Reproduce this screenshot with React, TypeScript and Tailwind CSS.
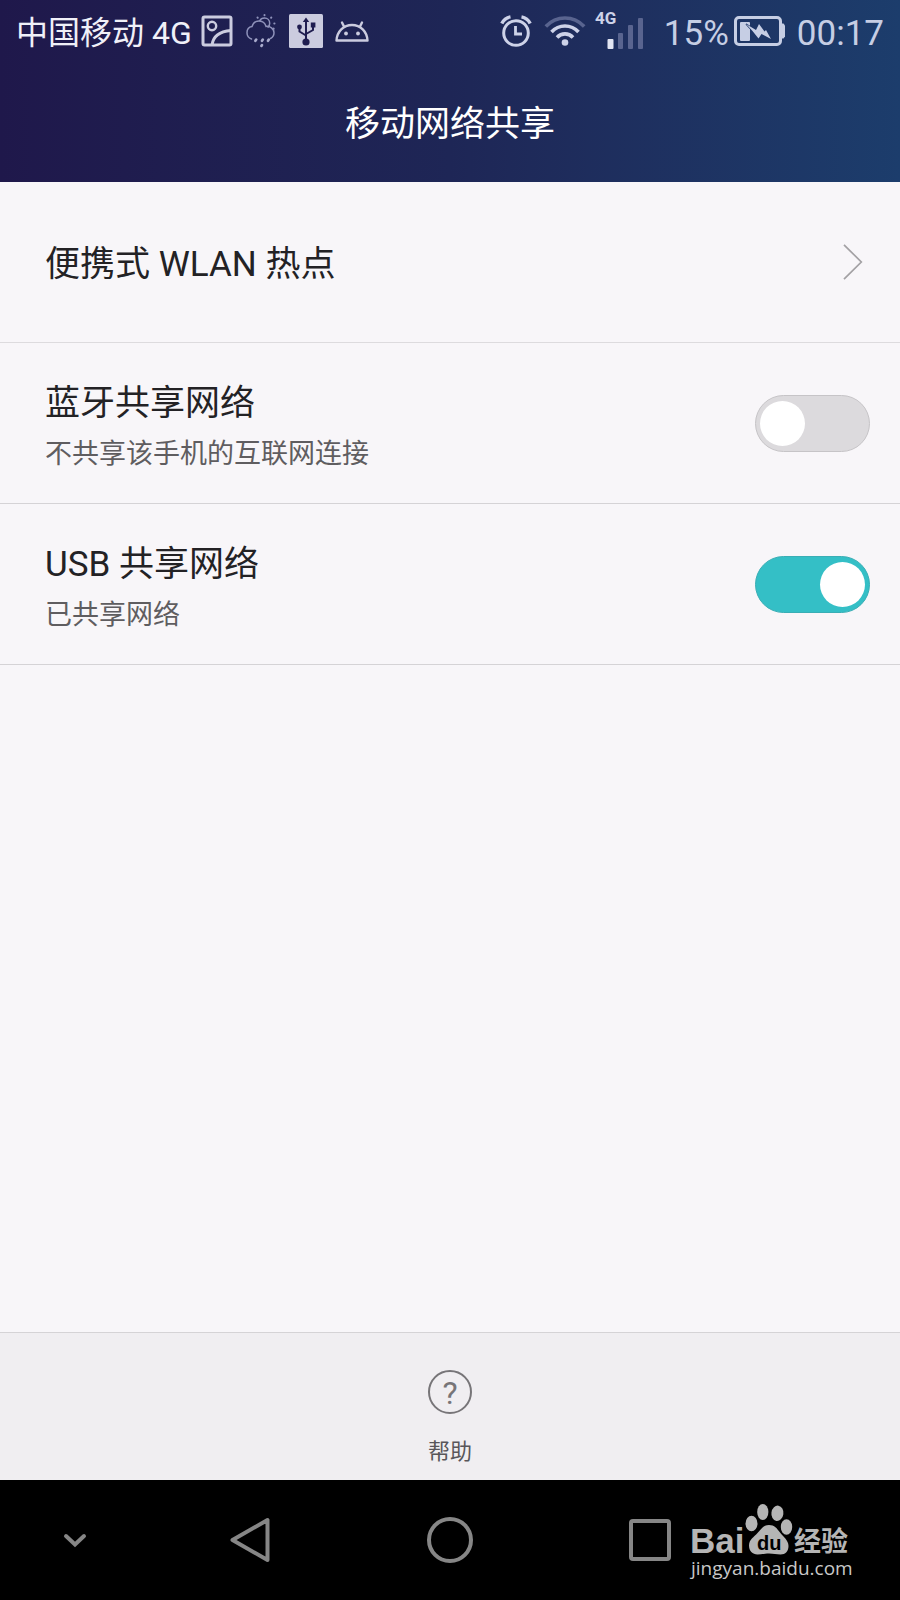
import React from 'react';

type SwitchRowProps = {
  id: string;
  title: string;
  onText: string;
  offText: string;
  defaultOn: boolean;
};

const PictureIcon = () => (
  <svg width="32" height="32" viewBox="0 0 32 32" fill="none" stroke="#cbccdf" strokeWidth="3" aria-hidden="true">
    <rect x="2" y="2" width="28" height="28" rx="1.5" />
    <circle cx="11" cy="11" r="4.2" strokeWidth="2.4" />
    <path d="M11 30c1-8 7-13.500 19-14.500" />
  </svg>
);

const WeatherIcon = () => (
  <svg width="32" height="34" viewBox="0 0 32 34" fill="none" stroke="#8f92ba" strokeWidth="1.5" strokeLinecap="round" aria-hidden="true">
    <path d="M6.500 25C3.500 24 2 21.500 2 18.800c0-3.500 2.300-5.800 5-6.200C8 9 11 6.800 14.500 7c3.300.2 5.600 2.300 6.500 5.400 4-.4 8 2.200 8 6.400 0 2.600-1.300 4.600-3.500 5.700" />
    <path d="M14.800 6.800c.8-1.800 2.600-2.800 4.700-2.800 3 0 5.200 2.300 5.200 5.200 0 1.600-.6 2.900-1.700 3.900" />
    <path d="M12.500 3.500l.2.200M19.500 1v.2M26.300 3.500l-.2.200M29.500 9.500h-.2M28.500 14.500l.2.200" strokeWidth="2" />
    <path d="M11.200 25.500l-.8 1.300M17.800 25.500l-.8 1.300M23.800 25.500l-.8 1.300M17 31l-.6 1" strokeWidth="2.600" stroke="#a9abcc" />
  </svg>
);

const UsbIcon = () => (
  <svg width="34" height="34" viewBox="0 0 34 34" aria-hidden="true">
    <rect width="34" height="34" rx="1.500" fill="#cbccdf" />
    <g fill="none" stroke="#1f1d50" strokeWidth="2">
      <path d="M17 28V6" />
      <path d="M17 21.500l-6.500-4V13" />
      <path d="M17 20l7-4V11" />
    </g>
    <path d="M17 3.500l3.200 4.500h-6.400z" fill="#1f1d50" />
    <circle cx="17" cy="28" r="3.600" fill="#1f1d50" />
    <circle cx="10.500" cy="13" r="2.400" fill="#1f1d50" />
    <rect x="21.800" y="8.500" width="4.600" height="5" fill="#1f1d50" />
  </svg>
);

const RobotIcon = () => (
  <svg width="34" height="22" viewBox="0 0 34 22" fill="none" stroke="#cbccdf" strokeWidth="2.400" strokeLinejoin="round" strokeLinecap="round" aria-hidden="true">
    <path d="M1.500 20.500C2 11.500 8.500 5 17 5s15 6.500 15.500 15.500z" />
    <path d="M9 6.500L7 2.500M25 6.500l2-4" />
    <circle cx="11" cy="13.500" r="1.900" fill="#cbccdf" stroke="none" />
    <circle cx="23" cy="13.500" r="1.900" fill="#cbccdf" stroke="none" />
  </svg>
);

const AlarmIcon = () => (
  <svg width="32" height="32" viewBox="0 0 32 32" fill="none" stroke="#cdd2e8" strokeWidth="3" aria-hidden="true">
    <circle cx="16" cy="18" r="12.300" />
    <path d="M15.500 11v8h6.500" strokeWidth="2.800" />
    <path d="M1.800 8.500C3.500 5 6.500 2.500 10.500 1.800M30.200 8.500C28.500 5 25.500 2.500 21.500 1.800" strokeWidth="3.400" />
  </svg>
);

const WifiIcon = () => (
  <svg width="42" height="32" viewBox="0 0 42 32" fill="none" stroke="#cdd2e8" strokeWidth="3.600" aria-hidden="true">
    <path d="M1.800 11.500C12.500 .2 29.500 .2 40.200 11.500" stroke="#59648f" />
    <path d="M7.500 17c7.500-8 19.500-8 27 0" />
    <path d="M13 22.500c4.500-4.800 11.500-4.800 16 0" />
    <circle cx="21" cy="27.500" r="3.300" fill="#cdd2e8" stroke="none" />
  </svg>
);

const SignalIcon = () => (
  <svg width="52" height="42" viewBox="0 -4 52 42" aria-label="4G 信号" role="img">
    <text x="1" y="13" fill="#cdd2e8" fontSize="17" fontWeight="700" fontFamily="Roboto, sans-serif">4G</text>
    <rect x="13.500" y="28" width="6" height="10" rx="1" fill="#e2e5f2" />
    <rect x="24" y="22" width="5" height="16" rx="1" fill="#59648f" />
    <rect x="34" y="14" width="5" height="24" rx="1" fill="#59648f" />
    <rect x="44" y="7" width="5" height="31" rx="1" fill="#59648f" />
  </svg>
);

const BatteryIcon = () => (
  <svg width="52" height="32" viewBox="0 0 52 32" aria-hidden="true">
    <rect x="2.500" y="2.500" width="45" height="27" rx="3.500" fill="none" stroke="#c6cee4" strokeWidth="3" />
    <path d="M47 8.500h3.500l1.500 2v11l-1.500 2H47z" fill="#c6cee4" />
    <rect x="7" y="7" width="10" height="19" rx="1" fill="#c6cee4" />
    <path d="M13 9l10 6 3-6 5.500 7.500L33 15l5 9-9.500-5-3 4.500-6-7.500z" fill="#c6cee4" stroke="#1d3566" strokeWidth="1.200" paintOrder="stroke" />
  </svg>
);

const BaiduLogo = () => (
  <svg width="170" height="84" viewBox="0 0 170 84" role="img" aria-label="Baidu 经验">
    <g fill="#b5b5b5">
      <text x="5" y="53" fontSize="35" fontWeight="700" fontFamily="'Liberation Sans', Arial, sans-serif">Bai</text>
      <ellipse cx="66.500" cy="23.500" rx="6" ry="7.700" />
      <ellipse cx="77.800" cy="12" rx="5.600" ry="8" />
      <ellipse cx="92.400" cy="13.300" rx="6" ry="7.700" transform="rotate(8 92.400 13.300)" />
      <ellipse cx="101.500" cy="27" rx="5.700" ry="7.700" />
      <path d="M84 25c5.500 0 8 3.500 11 7.500s8.500 7.500 8.500 13.500c0 5-3 8.500-8 8.500-4 0-7-1-11.500-1s-7.500 1-11.500 1c-5 0-8.500-3.500-8.500-9 0-6 5-8.500 8.500-12.500S78.500 25 84 25z" />
      <text x="109" y="51" fontSize="27" fontWeight="700" fontFamily="'Noto Sans CJK SC', sans-serif">经验</text>
    </g>
    <text x="72" y="50" fill="#000" fontSize="20" fontWeight="700" fontFamily="'Liberation Sans', Arial, sans-serif">du</text>
    <text x="6" y="75" fill="#c8c8c8" fontSize="19" fontFamily="'Open Sans', sans-serif">jingyan.baidu.com</text>
  </svg>
);

const SwitchRow: React.FC<SwitchRowProps> = ({ id, title, onText, offText, defaultOn }) => {
  const [on, setOn] = React.useState(defaultOn);

  return (
    <li className="flex min-h-[161px] items-center justify-between border-b border-[#d5d3d6] pl-[45px] pr-[30px]">
      <label htmlFor={id} className="flex-1 pt-1.5">
        <span className="block text-[35px] leading-[56px] text-[#232225]">{title}</span>
        <span className="block text-[27px] leading-[44px] text-[#5f5d60]">{on ? onText : offText}</span>
      </label>
      <input
        id={id}
        type="checkbox"
        role="switch"
        checked={on}
        onChange={(e) => setOn(e.target.checked)}
        className="flex h-[57px] w-[115px] shrink-0 cursor-pointer appearance-none items-center rounded-full border border-[#c6c4c7] bg-[#dcdadd] px-1 before:size-[45px] before:rounded-full before:bg-white before:content-[''] checked:justify-end checked:border-[#3aaeb5] checked:bg-[#34bfc6]"
      />
    </li>
  );
};

const App: React.FC = () => {
  return (
    <div className="flex min-h-screen flex-col bg-[#f8f6f9] font-[family-name:Roboto,'Noto_Sans_CJK_SC',sans-serif]">
      <header className="bg-linear-to-r from-[#1f184b] via-[#1e2656] to-[#1c3d6c]">
        <div className="flex h-[62px] items-center justify-between px-4">
          <div className="flex items-center gap-3">
            <span className="-mr-[3px] whitespace-nowrap pt-1 text-[32px] text-[#f0f0f8]">中国移动 4G</span>
            <PictureIcon />
            <WeatherIcon />
            <UsbIcon />
            <RobotIcon />
          </div>
          <div className="flex items-center text-[35px] text-[#c6cee4]">
            <div className="mr-[18px] flex items-center gap-x-2">
              <AlarmIcon />
              <span className="ml-1">
                <WifiIcon />
              </span>
              <span className="pb-1.5">
                <SignalIcon />
              </span>
            </div>
            <span className="mr-1 pt-1.5">15%</span>
            <BatteryIcon />
            <time className="ml-3 pt-1.5">00:17</time>
          </div>
        </div>
        <h1 className="flex h-[120px] items-center justify-center pt-1.5 text-[35px] text-white">移动网络共享</h1>
      </header>

      <main className="flex-1">
        <ul>
          <li className="border-b border-[#dddbde]">
            <button type="button" className="flex min-h-40 w-full cursor-pointer items-center justify-between pl-[45px] pr-[37px] text-left">
              <span className="pt-1.5 text-[35px] leading-[56px] text-[#232225]">便携式 WLAN 热点</span>
              <svg width="20" height="36" viewBox="0 0 20 36" fill="none" stroke="#a3a1a4" strokeWidth="1.700" aria-hidden="true">
                <path d="M1 .8L18.300 18 1 35.200" />
              </svg>
            </button>
          </li>
          <SwitchRow id="bluetooth" title="蓝牙共享网络" onText="已共享网络" offText="不共享该手机的互联网连接" defaultOn={false} />
          <SwitchRow id="usb" title="USB 共享网络" onText="已共享网络" offText="不共享该手机的互联网连接" defaultOn />
        </ul>
      </main>

      <footer>
        <div className="flex justify-center border-t border-[#d5d3d6] bg-[#f0eef1]">
          <button type="button" className="flex cursor-pointer flex-col items-center px-8 pb-3 pt-[37px] text-[#58565a]">
            <span className="flex size-11 items-center justify-center rounded-full border-2 border-[#777578] pt-0.5 text-[32px] text-[#777578]">?</span>
            <span className="mt-[22px] text-[22px] leading-8">帮助</span>
          </button>
        </div>

        <nav className="relative grid h-[120px] grid-cols-[3fr_4fr_4fr_4fr_3fr] bg-black text-[#868686]">
          <button type="button" aria-label="收起" className="flex cursor-pointer items-center justify-center">
            <svg width="24" height="16" viewBox="0 0 24 16" fill="none" stroke="currentColor" strokeWidth="4" strokeLinecap="round">
              <path d="M3 4l9 8.500L21 4" />
            </svg>
          </button>
          <button type="button" aria-label="返回" className="flex cursor-pointer items-center justify-center">
            <svg width="40" height="46" viewBox="0 0 40 46" fill="none" stroke="currentColor" strokeWidth="4" strokeLinejoin="round">
              <path d="M37.500 3v40L2.500 23z" />
            </svg>
          </button>
          <button type="button" aria-label="主页" className="flex cursor-pointer items-center justify-center">
            <span className="size-[46px] rounded-full border-4 border-current" />
          </button>
          <button type="button" aria-label="最近任务" className="flex cursor-pointer items-center justify-center">
            <span className="size-[42px] rounded border-4 border-current" />
          </button>
          <a href="#jingyan" className="absolute bottom-4 right-[45px]">
            <BaiduLogo />
          </a>
        </nav>
      </footer>
    </div>
  );
};

export default App;
